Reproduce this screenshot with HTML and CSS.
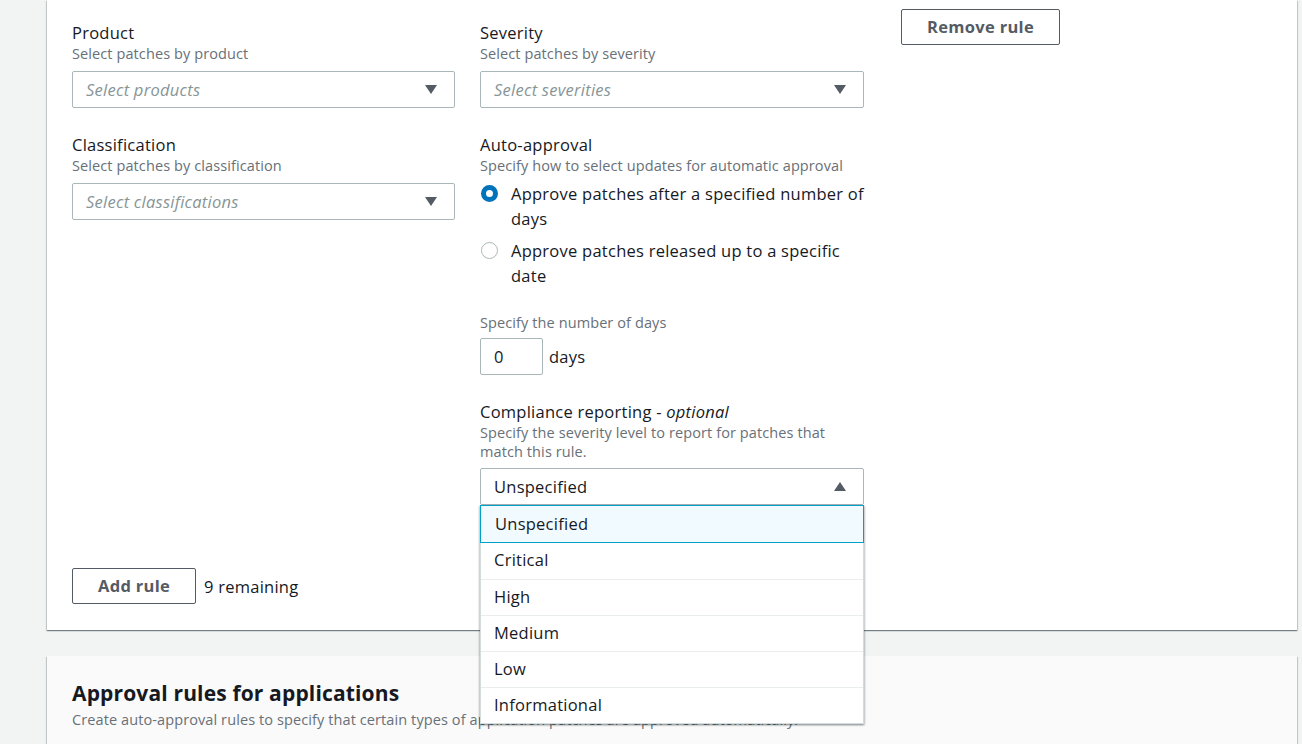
FILE: index.html
```html
<!DOCTYPE html>
<html lang="en">
<head>
<meta charset="utf-8">
<title>Patch baseline rules</title>
<link rel="stylesheet" href="styles.css">
</head>
<body>
<div class="page">
  <section class="card rule-card">
    <div class="rule-grid">
      <div class="col">
        <div class="field">
          <div class="label">Product</div>
          <div class="desc">Select patches by product</div>
          <div class="select"><span class="placeholder">Select products</span><span class="caret down"></span></div>
        </div>
        <div class="field">
          <div class="label">Classification</div>
          <div class="desc">Select patches by classification</div>
          <div class="select"><span class="placeholder">Select classifications</span><span class="caret down"></span></div>
        </div>
      </div>
      <div class="col">
        <div class="field">
          <div class="label">Severity</div>
          <div class="desc">Select patches by severity</div>
          <div class="select"><span class="placeholder">Select severities</span><span class="caret down"></span></div>
        </div>
        <div class="field">
          <div class="label">Auto-approval</div>
          <div class="desc">Specify how to select updates for automatic approval</div>
          <div class="radios">
            <div class="radio"><span class="dot checked"></span><span class="rtext">Approve patches after a specified number of days</span></div>
            <div class="radio"><span class="dot"></span><span class="rtext">Approve patches released up to a specific date</span></div>
          </div>
        </div>
        <div class="field days-field">
          <div class="desc">Specify the number of days</div>
          <div class="days-row"><div class="input">0</div><span class="unit">days</span></div>
        </div>
        <div class="field">
          <div class="label">Compliance reporting - <i>optional</i></div>
          <div class="desc two">Specify the severity level to report for patches that match this rule.</div>
          <div class="dropdown-wrap">
            <div class="select open"><span class="value">Unspecified</span><span class="caret up"></span></div>
            <ul class="options">
              <li class="selected">Unspecified</li>
              <li>Critical</li>
              <li>High</li>
              <li>Medium</li>
              <li>Low</li>
              <li>Informational</li>
            </ul>
          </div>
        </div>
      </div>
      <div class="col col-actions">
        <button class="btn remove">Remove rule</button>
      </div>
    </div>
    <div class="add-row">
      <button class="btn add">Add rule</button>
      <span class="remaining">9 remaining</span>
    </div>
  </section>
  <section class="card app-card">
    <h2>Approval rules for applications</h2>
    <p class="desc">Create auto-approval rules to specify that certain types of application patches are approved automatically.</p>
  </section>
</div>
</body>
</html>
```

FILE: styles.css
```css
* { box-sizing: border-box; }
html, body { margin: 0; padding: 0; }
body {
  background: #f2f3f3;
  font-family: "Open Sans", "Noto Sans", sans-serif;
  color: #16191f;
  width: 1302px;
  height: 744px;
  overflow: hidden;
}
.page {
  padding: 0 5px 0 47px;
}
.card {
  background: #fff;
  box-shadow: 0 1px 1px 0 rgba(0,28,36,.35), 1px 1px 1px 0 rgba(0,28,36,.15), -1px 1px 1px 0 rgba(0,28,36,.15);
}
.rule-card {
  padding: 9px 25px 26px 25px;
}
.rule-grid {
  display: grid;
  grid-template-columns: 383px 384px 159px;
  column-gap: 25px;
}
.rule-grid .col-actions { margin-left: 12px; }
.col { display: flex; flex-direction: column; }
.col .field:first-child { padding-top: 13px; }
.field { margin-bottom: 26px; }
.field:last-child { margin-bottom: 0; }
.label, .rtext, .select, .input, .unit, .options li, .remaining {
  font-size: 16.5px;
  letter-spacing: .25px;
}
.label {
  line-height: 22px;
  color: #16191f;
}
.desc {
  font-size: 14.5px;
  letter-spacing: .1px;
  line-height: 20px;
  color: #687078;
  margin: 0;
}
.desc.two { line-height: 19px; }
.select {
  margin-top: 7px;
  height: 37px;
  border: 1px solid #aab7b8;
  border-radius: 2px;
  display: flex;
  align-items: center;
  justify-content: space-between;
  padding: 0 17px 1px 13px;
  background: #fff;
}
.placeholder { color: #879596; font-style: italic; }
.value { color: #16191f; }
.caret {
  width: 0; height: 0;
  border-left: 6px solid transparent;
  border-right: 6px solid transparent;
}
.caret.down { border-top: 9px solid #545b64; }
.caret.up { border-bottom: 9px solid #545b64; }
.radios { margin-top: 5px; display: flex; flex-direction: column; gap: 7px; }
.radio { display: flex; align-items: flex-start; }
.dot {
  flex: none;
  width: 17px; height: 17px;
  border-radius: 50%;
  border: 1px solid #aab7b8;
  margin: 4px 13px 0 1px;
  background: #fff;
}
.dot.checked { border: 5px solid #0073bb; }
.rtext { line-height: 25px; }
.days-field { margin-top: -1px; }
.days-row { display: flex; align-items: center; margin-top: 5px; }
.input {
  width: 63px; height: 37px;
  border: 1px solid #aab7b8;
  border-radius: 2px;
  padding-left: 13px;
  line-height: 35px;
}
.unit { margin-left: 6px; }
.dropdown-wrap { position: relative; }
.options {
  position: absolute;
  left: 0; right: 0;
  top: 100%;
  margin: 0; padding: 0;
  list-style: none;
  background: #fff;
  border: 1px solid #d5dbdb;
  border-top: none;
  box-shadow: 0 1px 2px rgba(0,28,36,.3), 1px 1px 2px rgba(0,28,36,.15), -1px 1px 2px rgba(0,28,36,.15);
  z-index: 5;
}
.options li {
  height: 36px;
  line-height: 34px;
  padding-left: 13px;
  color: #16191f;
  border-top: 1px solid #eaeded;
}
.options li.selected {
  height: 38px;
  line-height: 35px;
  background: #f1faff;
  border: 1px solid #00a1c9;
  margin: 0 -1px;
  padding-left: 14px;
}
.options li.selected + li { border-top: none; }
.btn {
  font-family: inherit;
  font-size: 16.5px;
  letter-spacing: .3px;
  font-weight: 700;
  color: #545b64;
  background: #fff;
  border: 1px solid #545b64;
  border-radius: 2px;
  height: 36px;
  padding: 0 10px 1px;
  cursor: pointer;
}
.remove { width: 159px; }
.add { width: 124px; }
.add-row {
  display: flex;
  align-items: center;
  margin-top: 63px;
}
.remaining { margin-left: 8px; }
.app-card {
  margin-top: 26px;
  background: #fafafa;
  padding: 23px 25px 40px;
}
.app-card h2 {
  margin: 0 0 3px;
  font-size: 21px;
  letter-spacing: .15px;
  line-height: 28px;
  font-weight: 700;
}
.app-card .desc { line-height: 20px; }
```
